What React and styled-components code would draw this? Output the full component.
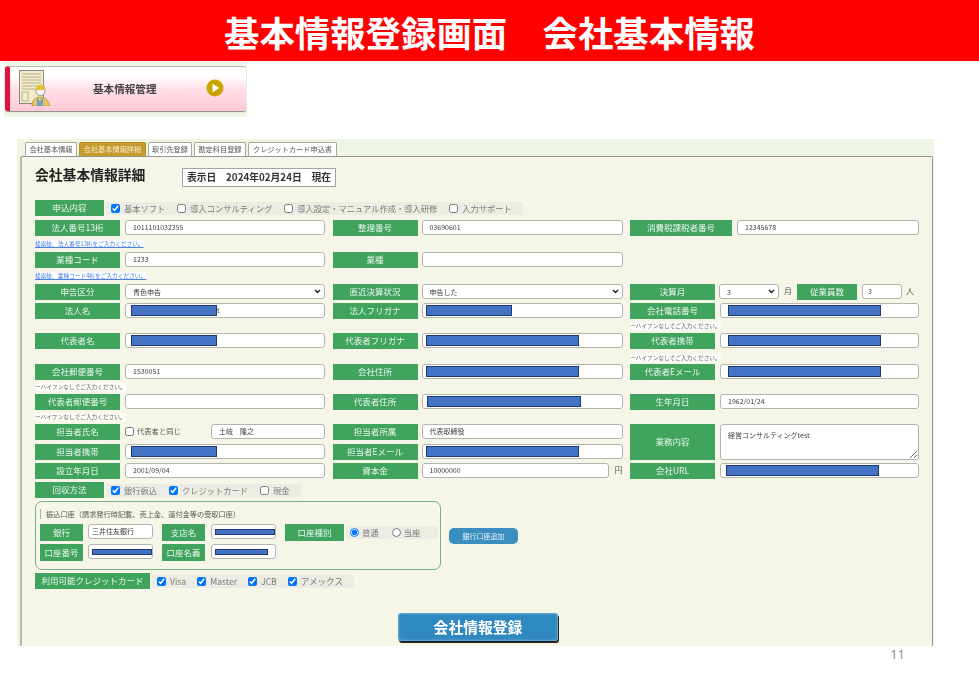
import React from "react";
import styled, { createGlobalStyle } from "styled-components";

const Global = createGlobalStyle`
  html, body { margin: 0; padding: 0; background: #fff; }
  body { width: 979px; height: 674px; overflow: hidden; font-family: "Noto Sans CJK JP", "Noto Sans", sans-serif; }
  * { box-sizing: border-box; }
`;

const chevron = "data:image/svg+xml,%3Csvg xmlns='http://www.w3.org/2000/svg' width='7' height='5' viewBox='0 0 7 5'%3E%3Cpath d='M1 1l2.500 2.500L6 1' fill='none' stroke='%23222' stroke-width='1.500'/%3E%3C/svg%3E";

const Page = styled.div`
  width: 979px;
  height: 674px;
  display: flex;
  flex-direction: column;
`;
const Header = styled.header`
  height: 61px;
  background: #ff0000;
  color: #fff;
  font-size: 35.4px;
  font-weight: 700;
  line-height: 64px;
  text-align: center;
  white-space: pre;
  flex: none;
`;
const MenuWrap = styled.div`
  margin: 1px 0 0 4px;
  width: 243px;
  height: 55px;
  padding: 4px 1px 6px;
  background: #eef6e4;
  filter: blur(0.3px);
  flex: none;
`;
const MenuCard = styled.div`
  height: 45px;
  border-radius: 3px;
  border-left: 5px solid #e0103f;
  box-shadow: 0 1px 1px 0 #8a8a86;
  border-top: 1px solid #b8b8b4;
  background: linear-gradient(#ffffff 0%, #ffffff 20%, #ffe0e8 50%, #ffc9d6 100%);
  display: flex;
  align-items: center;
  padding: 0 0 2px 9px;
`;
const MenuText = styled.span`
  margin-left: 40px;
  font-size: 10.6px;
  font-weight: 700;
  color: #444;
  width: 113px;
`;
const Panel = styled.section`
  margin: 22px 0 0 17px;
  width: 917px;
  height: 507px;
  background: #eef5e2;
  padding-top: 3px;
  padding-left: 3px;
  padding-right: 1px;
  display: flex;
  flex-direction: column;
  filter: blur(0.3px);
  flex: none;
`;
const Tabs = styled.nav`
  display: flex;
  gap: 2px;
  padding-left: 5px;
  height: 14px;
  flex: none;
`;
const Tab = styled.div`
  width: ${(p) => p.$w}px;
  height: 14px;
  border: 1px solid ${(p) => (p.$active ? "#b58c25" : "#a9a9a2")};
  border-bottom: 0;
  border-radius: 2px 2px 0 0;
  background: ${(p) => (p.$active ? "#c59a2f" : "#fff")};
  color: ${(p) => (p.$active ? "#f5e9c4" : "#555")};
  font-size: 7.2px;
  line-height: 12px;
  text-align: center;
  white-space: nowrap;
`;
const Body = styled.div`
  flex: 1;
  background: #f5f5e8;
  border: 1px solid #94988a;
  border-left: 2px solid #b4bda4;
  border-bottom: 0;
  border-radius: 2px 2px 0 0;
  padding: 10px 0 0 13px;
  display: flex;
  flex-direction: column;
  overflow: hidden;
`;
const TitleRow = styled.div`
  height: 20px;
  display: flex;
  align-items: center;
  margin-bottom: 13px;
`;
const Title = styled.h1`
  margin: 0;
  width: 147px;
  font-size: 13.8px;
  font-weight: 700;
  color: #222;
  line-height: 16px;
  padding-bottom: 6px;
`;
const DateBox = styled.div`
  width: 154px;
  height: 19px;
  background: #fff;
  border: 1px solid #a5a5a0;
  font-size: 9.8px;
  font-weight: 700;
  color: #333;
  line-height: 17px;
  text-align: center;
  white-space: pre;
`;
const Row = styled.div`
  display: grid;
  grid-template-columns: 290px 290px 289px;
  column-gap: 7.5px;
  height: 16px;
  margin-bottom: ${(p) => p.$mb || 0}px;
  flex: none;
`;
const HintRow = styled(Row)`
  height: 8px;
  margin-top: ${(p) => p.$mt}px;
`;
const Twin = styled.div`
  display: grid;
  grid-template-columns: 290px 290px 289px;
  grid-template-rows: 16px 16px;
  column-gap: 7.5px;
  row-gap: 4px;
  margin-bottom: 3px;
  flex: none;
`;
const Pair = styled.div`
  display: grid;
  grid-template-columns: ${(p) => p.$label || 85}px 1fr;
  column-gap: ${(p) => p.$gap || 5}px;
  grid-column: ${(p) => p.$col || "auto"};
  grid-row: ${(p) => p.$row || "auto"};
`;
const Label = styled.div`
  background: #40a45f;
  color: #e8f5ea;
  font-size: 8.5px;
  line-height: 14px;
  padding-bottom: 2px;
  text-align: center;
  white-space: nowrap;
  display: flex;
  align-items: center;
  justify-content: center;
  width: ${(p) => (p.$w ? `${p.$w}px` : "auto")};
  flex: none;
`;
const Field = styled.div`
  height: 15px;
  background: #fff;
  border: 1px solid #b4b4ae;
  border-radius: 3px;
  font-size: 7px;
  line-height: 13px;
  color: #3a3a3a;
  padding-left: ${(p) => p.$pad ?? 7}px;
  display: flex;
  align-items: center;
  width: ${(p) => (p.$w ? `${p.$w}px` : "auto")};
  margin-left: ${(p) => p.$ml || 0}px;
  flex: ${(p) => (p.$grow ? 1 : "none")};
  white-space: nowrap;
`;
const Redact = styled.span`
  display: block;
  width: ${(p) => p.$w}px;
  height: ${(p) => p.$h || 11}px;
  background: #4472c4;
  border: 1px solid #1d3a6e;
  flex: none;
`;
const Select = styled.select`
  appearance: none;
  height: 15px;
  width: ${(p) => (p.$w ? `${p.$w}px` : "100%")};
  margin-left: ${(p) => p.$ml || 0}px;
  background: #fff url("${chevron}") no-repeat right 3px center;
  border: 1px solid #b4b4ae;
  border-radius: 3px;
  font-family: inherit;
  font-size: 7px;
  color: #3a3a3a;
  padding: 0 0 0 7px;
  flex: none;
`;
const Area = styled.textarea`
  width: 100%;
  height: 36px;
  display: block;
  border: 1px solid #b4b4ae;
  border-radius: 3px;
  font-family: inherit;
  font-size: 7px;
  line-height: 10px;
  color: #3a3a3a;
  padding: 5px 7px;
`;
const Hint = styled.div`
  display: inline-block;
  justify-self: start;
  height: 8px;
  background: ${(p) => (p.$link ? "#fafcff" : "#fbfbf8")};
  color: ${(p) => (p.$link ? "#4a7ee0" : "#666")};
  font-size: 5.7px;
  line-height: 8px;
  white-space: nowrap;
  text-decoration: ${(p) => (p.$link ? "underline" : "none")};
  grid-column: ${(p) => p.$col || 1};
`;
const Group = styled.div`
  display: flex;
  align-items: center;
  gap: ${(p) => p.$gap || 12}px;
  height: 13px;
  margin: 2px 0 0 ${(p) => p.$ml || 1}px;
  padding: 0 ${(p) => p.$pr || 11}px 0 ${(p) => p.$pl || 6}px;
  background: #ecece4;
  font-size: ${(p) => p.$size || 8.25}px;
  color: #7a7a7a;
  white-space: nowrap;
  flex: none;
`;
const Check = styled.label`
  display: flex;
  align-items: center;
  gap: ${(p) => p.$gap || 4}px;
  line-height: 9px;
`;
const Tick = styled.input.attrs({ type: "checkbox" })`
  width: 9px;
  height: 9px;
  margin: 0;
  flex: none;
`;
const Radio = styled.input.attrs({ type: "radio" })`
  width: 9px;
  height: 9px;
  margin: 0;
  flex: none;
`;
const Line = styled.div`
  display: flex;
  height: 16px;
  margin-bottom: ${(p) => p.$mb || 0}px;
  flex: none;
`;
const Inline = styled.div`
  display: flex;
  align-items: flex-start;
`;
const Unit = styled.span`
  font-size: 8px;
  color: #555;
  line-height: 14px;
  margin-left: ${(p) => p.$ml || 4}px;
  margin-right: ${(p) => p.$mr || 0}px;
  flex: none;
`;
const SameCheck = styled(Check)`
  width: 86px;
  font-size: 7.3px;
  color: #555;
  height: 15px;
  flex: none;
`;
const BankLine = styled.div`
  display: flex;
  align-items: center;
  margin-bottom: 3px;
  flex: none;
`;
const BankBox = styled.div`
  width: 406px;
  height: 69px;
  border: 1px solid #76b08a;
  border-radius: 7px;
  padding: 7px 0 0 4px;
  flex: none;
`;
const BankTitle = styled.div`
  border-left: 1px solid #9cc0a5;
  padding-left: 5px;
  font-size: 7.2px;
  line-height: 10px;
  height: 10px;
  color: #555;
  margin-bottom: 5px;
  white-space: nowrap;
`;
const BankRow = styled.div`
  display: flex;
  height: 17px;
  margin-bottom: 3px;
`;
const BankField = styled(Field)`
  width: 65px;
  height: 15px;
  margin-left: 5px;
  margin-right: 9px;
  padding-left: 3px;
`;
const BankField2 = styled(BankField)`
  margin-left: 6px;
  margin-right: 9px;
`;
const AddButton = styled.button`
  width: 69px;
  height: 16px;
  margin-left: 8px;
  border: 0;
  border-radius: 5px;
  background: #3b8fc0;
  color: #e6f2f8;
  font-family: inherit;
  font-size: 7px;
  padding: 0;
`;
const SubmitRow = styled.div`
  margin: 23.500px 0 0 363px;
  flex: none;
`;
const Submit = styled.button`
  width: 160px;
  height: 28px;
  border: 0;
  border-radius: 3px;
  background: #3088c0;
  box-shadow: inset 0 0 3px #a6d0ea, 1px 2px 0 #222;
  color: #fff;
  font-family: inherit;
  font-size: 14.8px;
  font-weight: 700;
  padding: 0;
`;
const PageNo = styled.div`
  font-family: "Open Sans", "Liberation Sans", sans-serif;
  font-size: 13px;
  line-height: 14px;
  color: #8a8a8a;
  padding: 1px 74px 0 0;
  text-align: right;
`;

const DocIcon = () => (
  <svg width="34" height="36" viewBox="0 0 34 36" style={{ flex: "none" }}>
    <rect x="0.5" y="0.5" width="24" height="33" fill="#f3ecc8" stroke="#8a8a80" />
    <g stroke="#b5b09a" strokeWidth="1">
      {[4, 7, 10, 13, 16, 19].map((y) => <line key={y} x1="3" x2="22" y1={y} y2={y} />)}
    </g>
    <rect x="3" y="22" width="6" height="9" fill="none" stroke="#b5b09a" />
    <path d="M13 36c0-7 4-9 8-9s8 2 10 9z" fill="#e8c75a" stroke="#8a8030" strokeWidth="0.6" />
    <path d="M18 27l3 5 3-5v9h-6z" fill="#6f9fc9" />
    <circle cx="21.5" cy="21" r="4.6" fill="#f8f4ea" stroke="#6a7a88" strokeWidth="0.7" />
    <path d="M16.5 20c0-3.400 2.200-5.200 5-5.200s5 1.800 5 5.200z" fill="#e8c040" />
  </svg>
);

const PlayIcon = () => (
  <svg width="18" height="18" viewBox="0 0 18 18" style={{ flex: "none" }}>
    <circle cx="9" cy="9" r="8.500" fill="#cba400" />
    <path d="M6.500 4.800L13.300 9l-6.800 4.200z" fill="#fff" />
  </svg>
);

const T = ({ label, children, ...rest }) => (
  <Pair {...rest}>
    <Label>{label}</Label>
    {children}
  </Pair>
);

export default function App() {
  return (
    <Page>
      <Global />
      <Header>基本情報登録画面　会社基本情報</Header>
      <MenuWrap>
        <MenuCard>
          <DocIcon />
          <MenuText>基本情報管理</MenuText>
          <PlayIcon />
        </MenuCard>
      </MenuWrap>
      <Panel>
        <Tabs>
          <Tab $w={52}>会社基本情報</Tab>
          <Tab $w={67} $active>会社基本情報詳細</Tab>
          <Tab $w={44}>取引先登録</Tab>
          <Tab $w={52}>勘定科目登録</Tab>
          <Tab $w={89}>クレジットカード申込書</Tab>
        </Tabs>
        <Body>
          <TitleRow>
            <Title>会社基本情報詳細</Title>
            <DateBox>表示日　2024年02月24日　現在</DateBox>
          </TitleRow>

          <Line $mb={4}>
            <Label $w={69}>申込内容</Label>
            <Group>
              <Check><Tick defaultChecked />基本ソフト</Check>
              <Check><Tick />導入コンサルティング</Check>
              <Check><Tick />導入設定・マニュアル作成・導入研修</Check>
              <Check><Tick />入力サポート</Check>
            </Group>
          </Line>

          <Row>
            <T label="法人番号13桁"><Field>1011101032355</Field></T>
            <T label="整理番号" $gap={4}><Field>03690601</Field></T>
            <T label="消費税課税者番号" $label={102}><Field>12345678</Field></T>
          </Row>
          <HintRow $mt={4} $mb={4}><Hint $link>検索後、法人番号13桁をご入力ください。</Hint></HintRow>
          <Row>
            <T label="業種コード"><Field>1233</Field></T>
            <T label="業種" $gap={4}><Field /></T>
          </Row>
          <HintRow $mt={4} $mb={4}><Hint $link>検索後、業種コード4桁をご入力ください。</Hint></HintRow>

          <Row $mb={3}>
            <T label="申告区分">
              <Select defaultValue="a"><option value="a">青色申告</option></Select>
            </T>
            <T label="直近決算状況" $gap={4}>
              <Select defaultValue="a"><option value="a">申告した</option></Select>
            </T>
            <Inline>
              <Label $w={85}>決算月</Label>
              <Select $w={60} $ml={4} defaultValue="3"><option value="3">3</option></Select>
              <Unit $ml={5} $mr={5}>月</Unit>
              <Label $w={60}>従業員数</Label>
              <Field $w={40} $ml={5} $pad={5}>3</Field>
              <Unit>人</Unit>
            </Inline>
          </Row>
          <Row>
            <T label="法人名"><Field $pad={5}><Redact $w={86} /><span>t</span></Field></T>
            <T label="法人フリガナ" $gap={4}><Field $pad={3}><Redact $w={86} /></Field></T>
            <T label="会社電話番号"><Field><Redact $w={153} /></Field></T>
          </Row>
          <HintRow $mt={3} $mb={3}><Hint $col={3}>ーハイフンなしでご入力ください。</Hint></HintRow>
          <Row>
            <T label="代表者名"><Field $pad={5}><Redact $w={86} /></Field></T>
            <T label="代表者フリガナ" $gap={4}><Field $pad={3}><Redact $w={153} /></Field></T>
            <T label="代表者携帯"><Field><Redact $w={153} /></Field></T>
          </Row>
          <HintRow $mt={5} $mb={2}><Hint $col={3}>ーハイフンなしでご入力ください。</Hint></HintRow>
          <Row>
            <T label="会社郵便番号"><Field>1530051</Field></T>
            <T label="会社住所" $gap={4}><Field $pad={3}><Redact $w={153} /></Field></T>
            <T label="代表者Eメール"><Field><Redact $w={153} /></Field></T>
          </Row>
          <HintRow $mt={3} $mb={3}><Hint>ーハイフンなしでご入力ください。</Hint></HintRow>
          <Row>
            <T label="代表者郵便番号"><Field /></T>
            <T label="代表者住所" $gap={4}><Field $pad={4}><Redact $w={154} /></Field></T>
            <T label="生年月日"><Field>1962/01/24</Field></T>
          </Row>
          <HintRow $mt={3} $mb={3}><Hint>ーハイフンなしでご入力ください。</Hint></HintRow>

          <Twin>
            <Pair>
              <Label>担当者氏名</Label>
              <Inline>
                <SameCheck $gap={3}><Tick />代表者と同じ</SameCheck>
                <Field $grow>土岐　隆之</Field>
              </Inline>
            </Pair>
            <T label="担当者所属" $gap={4}><Field>代表取締役</Field></T>
            <T label="業務内容" $col={3} $row="1 / 3">
              <Area defaultValue="経営コンサルティングtest" />
            </T>
            <T label="担当者携帯"><Field $pad={5}><Redact $w={86} /></Field></T>
            <T label="担当者Eメール" $gap={4}><Field $pad={3}><Redact $w={153} /></Field></T>
          </Twin>

          <Row $mb={3}>
            <T label="設立年月日"><Field>2001/09/04</Field></T>
            <T label="資本金" $gap={4}>
              <Inline>
                <Field $grow>10000000</Field>
                <Unit $ml={6}>円</Unit>
              </Inline>
            </T>
            <T label="会社URL"><Field $pad={5}><Redact $w={153} /></Field></T>
          </Row>

          <Line $mb={3}>
            <Label $w={69}>回収方法</Label>
            <Group $ml={2} $pl={5} $pr={11} $gap={12}>
              <Check><Tick defaultChecked />銀行振込</Check>
              <Check><Tick defaultChecked />クレジットカード</Check>
              <Check><Tick />現金</Check>
            </Group>
          </Line>

          <BankLine>
            <BankBox>
              <BankTitle>振込口座（請求発行時記載、売上金、還付金等の受取口座）</BankTitle>
              <BankRow>
                <Label $w={43}>銀行</Label>
                <BankField $pad={7}>三井住友銀行</BankField>
                <Label $w={43}>支店名</Label>
                <BankField2><Redact $w={60} $h={6} /></BankField2>
                <Label $w={59}>口座種別</Label>
                <Group $ml={2} $pl={4} $pr={17} $gap={13} $size={8.4}>
                  <Check $gap={3}><Radio name="kind" defaultChecked />普通</Check>
                  <Check $gap={3}><Radio name="kind" />当座</Check>
                </Group>
              </BankRow>
              <BankRow>
                <Label $w={43}>口座番号</Label>
                <BankField><Redact $w={60} $h={6} /></BankField>
                <Label $w={43}>口座名義</Label>
                <BankField2><Redact $w={53} $h={6} /></BankField2>
              </BankRow>
            </BankBox>
            <AddButton>銀行口座追加</AddButton>
          </BankLine>

          <Line>
            <Label $w={115}>利用可能クレジットカード</Label>
            <Group $ml={2} $pl={5} $pr={11} $gap={11} $size={8.6}>
              <Check $gap={4}><Tick defaultChecked />Visa</Check>
              <Check $gap={4}><Tick defaultChecked />Master</Check>
              <Check $gap={4}><Tick defaultChecked />JCB</Check>
              <Check $gap={4}><Tick defaultChecked />アメックス</Check>
            </Group>
          </Line>

          <SubmitRow><Submit>会社情報登録</Submit></SubmitRow>
        </Body>
      </Panel>
      <PageNo>11</PageNo>
    </Page>
  );
}
